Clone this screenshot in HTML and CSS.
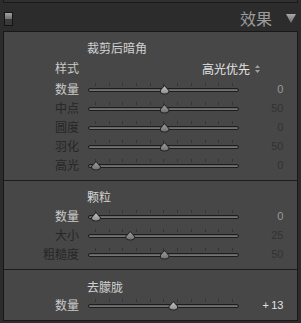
FILE: index.html
```html
<!DOCTYPE html>
<html lang="zh-CN">
<head>
    <meta charset="UTF-8">
    <meta name="viewport" content="width=device-width, initial-scale=1.0">
    <title>效果</title>
    <link rel="stylesheet" href="styles.css">
</head>
<body>
    <div class="top-edge"></div>
    <div class="header">
        <span class="switch"></span>
        <span class="title">效果</span>
        <svg class="collapse" width="10" height="9" viewBox="0 0 10 9">
            <defs>
                <linearGradient id="tri" x1="0" y1="0" x2="0" y2="1">
                    <stop offset="0" stop-color="#a8a8a8"/>
                    <stop offset="1" stop-color="#6e6e6e"/>
                </linearGradient>
            </defs>
            <polygon points="0,0 10,0 5,9" fill="url(#tri)"/>
        </svg>
    </div>

    <div class="panel">
        <section class="group first">
            <div class="group-title">裁剪后暗角</div>
            <div class="row pick">
                <span class="label">样式</span>
                <span class="select">高光优先
                    <svg class="updown" width="5" height="8" viewBox="0 0 5 8">
                        <polygon points="2.5,0 5,3 0,3" fill="#a0a0a0"/>
                        <polygon points="0,5 5,5 2.5,8" fill="#a0a0a0"/>
                    </svg>
                </span>
            </div>
            <div class="row">
                <span class="label">数量</span>
                <div class="slider"><div class="ticks"></div><div class="track"></div><div class="travel"><span class="thumb" style="left: 50%"></span></div></div>
                <span class="value">0</span>
            </div>
            <div class="row off">
                <span class="label">中点</span>
                <div class="slider"><div class="ticks"></div><div class="track"></div><div class="travel"><span class="thumb" style="left: 50%"></span></div></div>
                <span class="value">50</span>
            </div>
            <div class="row off">
                <span class="label">圆度</span>
                <div class="slider"><div class="ticks"></div><div class="track"></div><div class="travel"><span class="thumb" style="left: 50%"></span></div></div>
                <span class="value">0</span>
            </div>
            <div class="row off">
                <span class="label">羽化</span>
                <div class="slider"><div class="ticks"></div><div class="track"></div><div class="travel"><span class="thumb" style="left: 50%"></span></div></div>
                <span class="value">50</span>
            </div>
            <div class="row off">
                <span class="label">高光</span>
                <div class="slider"><div class="ticks"></div><div class="track"></div><div class="travel"><span class="thumb" style="left: 0%"></span></div></div>
                <span class="value">0</span>
            </div>
        </section>

        <section class="group second">
            <div class="group-title">颗粒</div>
            <div class="row">
                <span class="label">数量</span>
                <div class="slider"><div class="ticks"></div><div class="track"></div><div class="travel"><span class="thumb" style="left: 0%"></span></div></div>
                <span class="value">0</span>
            </div>
            <div class="row off">
                <span class="label">大小</span>
                <div class="slider"><div class="ticks"></div><div class="track"></div><div class="travel"><span class="thumb" style="left: 25%"></span></div></div>
                <span class="value">25</span>
            </div>
            <div class="row off">
                <span class="label">粗糙度</span>
                <div class="slider"><div class="ticks"></div><div class="track"></div><div class="travel"><span class="thumb" style="left: 50%"></span></div></div>
                <span class="value">50</span>
            </div>
        </section>

        <section class="group third">
            <div class="group-title">去朦胧</div>
            <div class="row">
                <span class="label">数量</span>
                <div class="slider"><div class="ticks"></div><div class="track"></div><div class="travel"><span class="thumb" style="left: 56.5%"></span></div></div>
                <span class="value bright">+ 13</span>
            </div>
        </section>
    </div>
</body>
</html>
```

FILE: styles.css
```css
body {
    margin: 0;
    width: 301px;
    height: 323px;
    overflow: hidden;
    background-color: #2c2c2c;
    font-family: "Noto Sans CJK SC", "Noto Sans", sans-serif;
    font-size: 12px;
    color: #c6c6c6;
}
.top-edge {
    height: 2px;
    margin: 0 3px;
    background-color: #303030;
    border: 1px solid #1a1a1a;
    border-top: none;
}
.header {
    display: flex;
    align-items: center;
    height: 28px;
    padding: 0 5px 0 4px;
}
.switch {
    box-sizing: border-box;
    width: 9px;
    height: 14px;
    margin-top: 3px;
    border: 1px solid #141414;
    background: linear-gradient(#a2a2a2, #6c6c6c 50%, #3c3c3c 50%, #383838);
}
.title {
    margin-left: auto;
    margin-top: 2px;
    font-size: 16px;
    line-height: 20px;
    color: #9c9c9c;
}
.collapse {
    margin-left: 14px;
    margin-top: 3px;
}
.panel {
    margin: 0 3px;
    background-color: #474747;
    border: 1px solid #181818;
}
.group {
    padding: 6px 0 5px;
    border-bottom: 1px solid #1c1c1c;
}
.group.third {
    padding-top: 7px;
    border-bottom: none;
}
.group-title {
    height: 19px;
    line-height: 19px;
    padding-left: 83px;
    color: #d2d2d2;
}
.first .group-title,
.pick {
    margin-bottom: 2px;
}
.second .group-title {
    margin-bottom: 1px;
}
.row {
    display: flex;
    height: 19px;
    line-height: 18px;
}
.label {
    width: 75px;
    margin-right: 9px;
    text-align: right;
    color: #cacaca;
}
.off .label {
    color: #262626;
}
.select {
    flex: 1;
    display: flex;
    align-items: center;
    justify-content: flex-end;
    padding-right: 37px;
    color: #e4e4e4;
}
.updown {
    margin-left: 5px;
}
.slider {
    position: relative;
    width: 151px;
    padding-top: 3px;
    box-sizing: border-box;
}
.ticks {
    width: 138px;
    height: 3px;
    margin: 0 0 2px 7px;
    background: repeating-linear-gradient(to right, #353535 0 1px, transparent 1px 13.7px);
}
.track {
    box-sizing: border-box;
    height: 4px;
    border: 1px solid #1d1d1d;
    border-radius: 2px;
    background: linear-gradient(#5c5c5c, #7a7a7a);
}
.travel {
    position: absolute;
    top: 0;
    bottom: 0;
    left: 7px;
    right: 7px;
}
.thumb {
    position: absolute;
    top: 5px;
    width: 10px;
    height: 10px;
    margin-left: -4px;
    background-color: #262626;
    clip-path: path('M5 0 L10 5.5 Q10 9.5 5 9.5 Q0 9.5 0 5.5 Z');
}
.thumb::after {
    content: "";
    position: absolute;
    left: 1px;
    top: 1px;
    width: 8px;
    height: 8px;
    background: linear-gradient(#c4c4c4, #8a8a8a);
    clip-path: path('M4 0.3 L8 4.8 Q8 7.5 4 7.5 Q0 7.5 0 4.8 Z');
}
.off .thumb::after {
    background: linear-gradient(#a0a0a0, #6e6e6e);
}
.value {
    flex: 1;
    padding-right: 14px;
    text-align: right;
    font-family: "Liberation Sans", Arial, sans-serif;
    font-size: 11px;
    letter-spacing: -0.3px;
    line-height: 19px;
    color: #9a9a9a;
}
.off .value {
    color: #323232;
}
.value.bright {
    color: #e2e2e2;
}
```
